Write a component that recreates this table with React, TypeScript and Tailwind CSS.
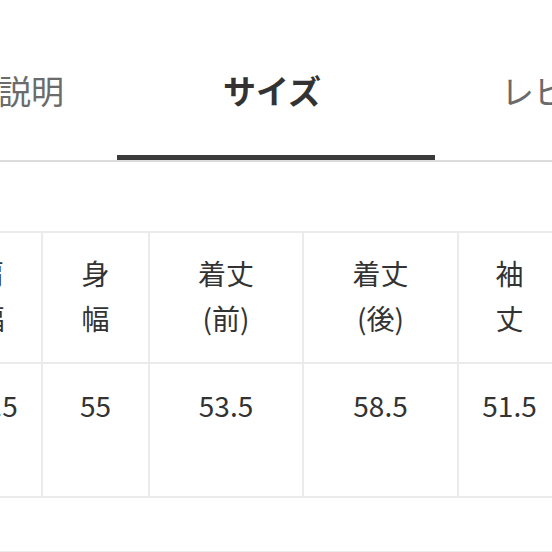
const FONT = "font-['Noto_Sans_CJK_JP','Noto_Sans',sans-serif]";

const TABS = [
  { label: "商品説明", width: "w-[242px]", pad: "pl-[4px]", active: false },
  { label: "サイズ", width: "w-[318px]", pad: "pr-[8px]", active: true },
  { label: "レビュー", width: "w-[274px]", pad: "pr-[10px]", active: false },
];

const COLUMNS = [
  { head: ["肩", "幅"], value: "46.5" },
  { head: ["身", "幅"], value: "55" },
  { head: ["着丈", "(前)"], value: "53.5" },
  { head: ["着丈", "(後)"], value: "58.5" },
  { head: ["袖", "丈"], value: "51.5" },
];

export default function App() {
  return (
    <div className={`w-[552px] h-[552px] overflow-hidden bg-white text-[#333] ${FONT}`}>
      {/* Tabs */}
      <div className="border-b-2 border-[#dcdcdc]">
        <div className="flex h-[160px] ml-[-125px]">
          {TABS.map((t) => (
            <div key={t.label} className={`flex flex-none flex-col ${t.width}`}>
              <div
                className={`pt-[66px] text-center text-[33px] leading-[48px] whitespace-nowrap ${t.pad} ${
                  t.active ? "font-bold text-[#333]" : "text-[#6b6b6b]"
                }`}
              >
                {t.label}
              </div>
              {t.active && <div className="mt-auto h-[5px] bg-[#3a3a3a]" />}
            </div>
          ))}
        </div>
      </div>

      {/* Size table */}
      <div className="mt-[69px] ml-[-62px]">
        <div className="grid w-[622px] grid-cols-[103px_107px_154px_155px_103px] border-t-2 border-l-2 border-[#ebebeb] text-[28px] leading-[45px]">
          {COLUMNS.map((c) => (
            <div key={c.value + "h"} className="h-[131px] border-r-2 border-b-2 border-[#ebebeb] pt-[18px] text-center">
              <div>{c.head[0]}</div>
              <div>{c.head[1]}</div>
            </div>
          ))}
          {COLUMNS.map((c) => (
            <div key={c.value} className="h-[134px] border-r-2 border-b-2 border-[#ebebeb] pt-[19px] text-center">
              {c.value}
            </div>
          ))}
        </div>
        <div className="mt-[53px] border-t-2 border-[#ebebeb]" />
      </div>
    </div>
  );
}
